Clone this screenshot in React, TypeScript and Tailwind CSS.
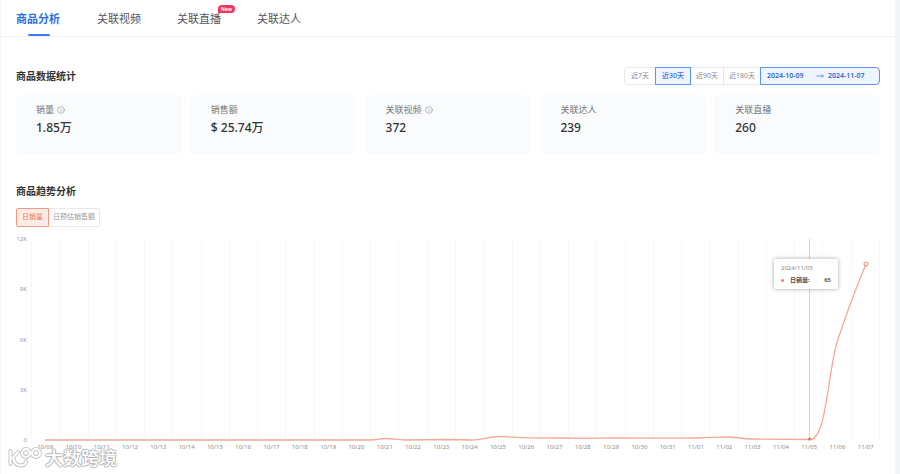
import { Info, MoveRight } from "lucide-react";

const tabs = [
  { label: "商品分析", active: true },
  { label: "关联视频" },
  { label: "关联直播", badge: "New" },
  { label: "关联达人" },
];

const ranges = [
  { label: "近7天" },
  { label: "近30天", active: true },
  { label: "近90天" },
  { label: "近180天" },
];

const stats = [
  { label: "销量", value: "1.85万", info: true },
  { label: "销售额", value: "$ 25.74万" },
  { label: "关联视频", value: "372", info: true },
  { label: "关联达人", value: "239" },
  { label: "关联直播", value: "260" },
];

const days = [
  "10/09", "10/10", "10/11", "10/12", "10/13", "10/14", "10/15", "10/16", "10/17", "10/18",
  "10/19", "10/20", "10/21", "10/22", "10/23", "10/24", "10/25", "10/26", "10/27", "10/28",
  "10/29", "10/30", "10/31", "11/01", "11/02", "11/03", "11/04", "11/05", "11/06", "11/07",
];

const TREND =
  "M14 201 H340 C348 201 349 199.5 355 199.5 C362 199.5 366 201 374 201 L415 200.5 L440 201 C452 201.5 456 197.5 469 197.5 C480 197.5 486 198.8 500 198.8 L530 199 L555 199.4 L580 198.8 L640 199.2 L668 199 C680 198.8 686 198 696 198 C706 198 712 199.8 722 200 L780 200.5 C797 200.5 798 128 808 100 C816 76 828 44 836 25";

function Tabs() {
  return (
    <nav className="flex h-[37px] gap-9 border-b border-[#f0f2f4] px-[15px]">
      {tabs.map((t) => (
        <button
          key={t.label}
          type="button"
          className={
            t.active
              ? "relative flex h-9 w-[45px] items-center pt-0.5 text-[11px] font-bold whitespace-nowrap text-[#2b6de8]"
              : "relative flex h-9 items-center pt-0.5 text-[11px] text-[#555]"
          }
        >
          {t.label}
          {t.active && (
            <span className="absolute bottom-0 left-1/2 h-0.5 w-[22px] -translate-x-1/2 rounded-full bg-[#3b7cf0]" />
          )}
          {t.badge && (
            <span className="absolute top-[5px] -right-[14px] h-2 rounded-full rounded-bl-none bg-[#f5345f] px-[3px] text-[5px] leading-2 font-bold text-white">
              {t.badge}
            </span>
          )}
        </button>
      ))}
    </nav>
  );
}

function DateFilter() {
  return (
    <div className="flex h-[18px] text-[7px]">
      {ranges.map((r) => (
        <button
          key={r.label}
          type="button"
          className={
            r.active
              ? "border border-[#5b93f5] bg-[#eef5ff] px-[6px] font-medium text-[#2f70ea]"
              : "border-y border-r border-[#e8e8e8] px-[5px] text-[#8c8c8c] first:rounded-l first:border-r-0 first:border-l first:px-[6px]"
          }
        >
          {r.label}
        </button>
      ))}
      <div className="-ml-px flex w-[120px] items-center rounded-r border border-[#5b93f5] bg-[#eef5ff] pl-1.5 font-semibold text-[#3069d4]">
        <input aria-label="开始日期" readOnly defaultValue="2024-10-09" className="w-12 outline-none" />
        <MoveRight className="ml-px mr-1 size-2" />
        <input aria-label="结束日期" readOnly defaultValue="2024-11-07" className="w-12 outline-none" />
      </div>
    </div>
  );
}

function Chart() {
  return (
    <div className="mt-3 flex">
      <div className="flex h-[201px] w-[15px] flex-col justify-between pr-1 text-right text-[6px] leading-[0px] text-[#999]">
        {["12K", "9K", "6K", "3K", "0"].map((v) => (
          <span key={v}>{v}</span>
        ))}
      </div>
      <div className="min-w-0 flex-1">
        <div className="relative h-[201px]">
          <div className="flex h-full border-l border-[#f8f8f8]">
            {days.map((d) => (
              <div key={d} className="flex-1 border-r border-[#f8f8f8]" />
            ))}
          </div>
          <div className="absolute inset-y-0 left-[91.6%] w-px bg-[#d4d4d4]" />
          <svg viewBox="0 0 850 201" preserveAspectRatio="none" className="absolute inset-0 size-full overflow-visible" fill="none">
            <path d={TREND} stroke="#f5a994" strokeWidth="1.3" vectorEffect="non-scaling-stroke" />
          </svg>
          <span className="absolute top-[200px] left-[91.6%] size-[3px] -translate-x-[1px] -translate-y-1/2 rounded-full bg-[#ee7350]" />
          <span className="absolute top-[25px] left-[98.3%] size-[5px] -translate-x-1/2 -translate-y-1/2 rounded-full border border-[#ee8366] bg-white" />
          <div className="absolute top-5 right-[42px] w-16 rounded-xs bg-white px-[7px] py-[5px] text-[6px] leading-[8px] text-[#888] shadow-[0_0_4px_rgba(0,0,0,0.35)]">
            <div>2024/11/05</div>
            <div className="mt-1 flex items-center text-[#444]">
              <span className="mr-1.5 size-[3px] rounded-full bg-[#ee7d5e]" />
              <span className="font-bold">日销量:</span>
              <span className="ml-auto font-semibold">65</span>
            </div>
          </div>
        </div>
        <div className="mt-[3px] flex text-[6px] leading-[8px] text-[#8c8c8c]">
          {days.map((d) => (
            <span key={d} className="w-0 flex-1 text-center">{d}</span>
          ))}
        </div>
      </div>
    </div>
  );
}

function Watermark() {
  return (
    <div className="absolute bottom-[5px] left-[7px] flex items-center gap-[3px]">
      <svg width="34" height="22" viewBox="0 0 34 22" fill="none" strokeLinecap="round" strokeLinejoin="round">
        {[
          { c: "#c4c4c4", w: 4 },
          { c: "#ffffff", w: 2.2 },
        ].map((s) => (
          <g key={s.c} stroke={s.c} strokeWidth={s.w}>
            <path d="M2.5 4V17M10 5L5 10.5C6 15 8.500 18.500 12.500 18.500C15.500 18.500 17.500 16.500 18 14.500" />
            <circle cx="18" cy="6" r="4" />
            <circle cx="28" cy="6" r="4" />
          </g>
        ))}
      </svg>
      <span className="text-[18px] leading-[22px] font-medium text-white [text-shadow:1px_0_1px_#b4b4b4,-1px_0_1px_#b4b4b4,0_1px_1px_#b4b4b4,0_-1px_1px_#b4b4b4]">大数跨境</span>
    </div>
  );
}

export default function App() {
  return (
    <div className="relative min-h-screen border-r-5 border-l border-r-[#f3f5f9] border-l-[#f3f5f9] bg-white font-['Noto_Sans','Noto_Sans_CJK_SC',sans-serif]">
      <Tabs />
      <main className="px-[15px] pt-[30px] pb-5">
        <div className="flex items-center justify-between">
          <h2 className="text-[10px] leading-[14px] font-bold text-[#333]">商品数据统计</h2>
          <DateFilter />
        </div>
        <div className="mt-2.5 grid grid-cols-5 gap-2.5">
          {stats.map((s) => (
            <section key={s.label} className="rounded bg-[#f9fbfd] px-5 pt-2 pb-[17px]">
              <div className="flex items-center gap-[3px] text-[9px] leading-[14px] text-[#777]">
                {s.label}
                {s.info && <Info className="size-2 text-[#999]" strokeWidth={2} />}
              </div>
              <div className="mt-0.5 text-[12px] leading-[18px] font-medium text-[#333]">{s.value}</div>
            </section>
          ))}
        </div>
        <h2 className="mt-[30px] text-[10px] leading-[14px] font-bold text-[#333]">商品趋势分析</h2>
        <div className="mt-2.5 flex h-[19px] text-[7px]">
          <button type="button" className="rounded-l-xs border border-[#f09a82] bg-[#fdebe6] px-[5px] text-[#ee7656]">日销量</button>
          <button type="button" className="rounded-r-xs border border-l-0 border-[#e8e8e8] px-1 text-[#999]">日预估销售额</button>
        </div>
        <Chart />
      </main>
      <Watermark />
    </div>
  );
}
